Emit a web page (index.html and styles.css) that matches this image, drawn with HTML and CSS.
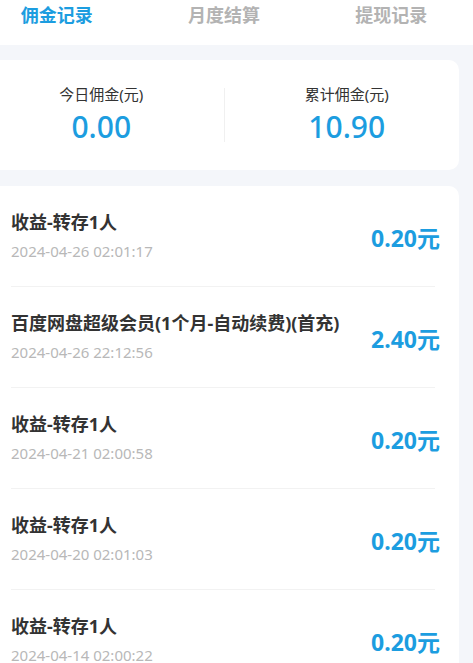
FILE: index.html
```html
<!DOCTYPE html>
<html lang="zh-CN">
<head>
    <meta charset="UTF-8">
    <meta name="viewport" content="width=device-width, initial-scale=1.0">
    <title>佣金记录</title>
    <link rel="stylesheet" href="styles.css">
</head>
<body>
    <div class="page">
        <div class="tabs">
            <div class="tab active">佣金记录</div>
            <div class="tab">月度结算</div>
            <div class="tab">提现记录</div>
        </div>

        <div class="card stats">
            <div class="stat stat-left">
                <div class="stat-label">今日佣金(元)</div>
                <div class="stat-value">0.00</div>
            </div>
            <div class="stat-divider"></div>
            <div class="stat stat-right">
                <div class="stat-label">累计佣金(元)</div>
                <div class="stat-value">10.90</div>
            </div>
        </div>

        <div class="card records">
            <div class="record">
                <div class="record-info">
                    <div class="record-title">收益-转存1人</div>
                    <div class="record-time">2024-04-26 02:01:17</div>
                </div>
                <div class="record-amount">0.20元</div>
            </div>
            <div class="record">
                <div class="record-info">
                    <div class="record-title">百度网盘超级会员(1个月-自动续费)(首充)</div>
                    <div class="record-time">2024-04-26 22:12:56</div>
                </div>
                <div class="record-amount">2.40元</div>
            </div>
            <div class="record">
                <div class="record-info">
                    <div class="record-title">收益-转存1人</div>
                    <div class="record-time">2024-04-21 02:00:58</div>
                </div>
                <div class="record-amount">0.20元</div>
            </div>
            <div class="record">
                <div class="record-info">
                    <div class="record-title">收益-转存1人</div>
                    <div class="record-time">2024-04-20 02:01:03</div>
                </div>
                <div class="record-amount">0.20元</div>
            </div>
            <div class="record">
                <div class="record-info">
                    <div class="record-title">收益-转存1人</div>
                    <div class="record-time">2024-04-14 02:00:22</div>
                </div>
                <div class="record-amount">0.20元</div>
            </div>
        </div>
    </div>
</body>
</html>
```

FILE: styles.css
```css
body {
    margin: 0;
    padding: 0;
    background-color: #f4f6fa;
    font-family: "Noto Sans", "Noto Sans CJK SC", sans-serif;
    overflow: hidden;
}

/* the screen is a little wider than the picture, cropped on the left */
.page {
    width: 502px;
    margin-left: -27px;
}

.tabs {
    display: grid;
    grid-template-columns: repeat(3, 1fr);
    height: 45px;
    background-color: #fff;
}

.tab {
    text-align: center;
    font-size: 18px;
    font-weight: 700;
    line-height: 24px;
    padding-top: 3px;
    color: #b3b3b3;
}

.tab.active {
    color: #1c9de0;
}

.card {
    background-color: #fff;
    border-radius: 10px;
    margin: 15px 16px 0 16px;
}

.stats {
    display: grid;
    grid-template-columns: 1fr 1px 1fr;
    align-items: center;
    height: 110px;
}

.stat {
    text-align: center;
    margin-top: -2px;
}

.stat-left {
    padding-right: 10px;
}

.stat-right {
    padding-left: 10px;
}

.stat-divider {
    height: 54px;
    background-color: #f0f0f0;
}

.stat-label {
    font-size: 15px;
    line-height: 22px;
    color: #333;
}

.stat-value {
    font-size: 30px;
    font-weight: 500;
    line-height: 36px;
    margin-top: 4px;
    color: #1c9de0;
}

.records {
    margin-top: 16px;
    padding: 0 24px 0 22px;
}

.record {
    display: flex;
    align-items: center;
    justify-content: space-between;
    padding: 24px 0 23px 0;
    border-bottom: 1px solid #f2f2f2;
}

.record-title {
    font-size: 18px;
    font-weight: 700;
    line-height: 24px;
    color: #333;
}

.record-time {
    font-size: 15px;
    line-height: 24px;
    margin-top: 5px;
    color: #b8b8b8;
}

.record-amount {
    font-size: 23px;
    font-weight: 700;
    color: #1c9de0;
    margin-right: -5px;
    white-space: nowrap;
}
```
